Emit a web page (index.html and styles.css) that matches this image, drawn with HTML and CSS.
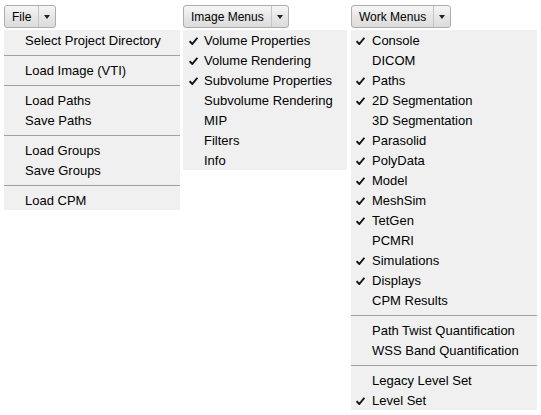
FILE: index.html
```html
<!DOCTYPE html>
<html>
<head>
<meta charset="utf-8">
<link rel="stylesheet" href="styles.css">
</head>
<body>
<div class="bar">
  <div class="col col-file">
    <div class="btn"><span class="btn-label">File</span><span class="btn-arrow"><span class="tri"></span></span></div>
    <div class="menu">
      <div class="item">Select Project Directory</div>
      <div class="sep"></div>
      <div class="item">Load Image (VTI)</div>
      <div class="sep"></div>
      <div class="item">Load Paths</div>
      <div class="item">Save Paths</div>
      <div class="sep"></div>
      <div class="item">Load Groups</div>
      <div class="item">Save Groups</div>
      <div class="sep"></div>
      <div class="item">Load CPM</div>
    </div>
  </div>
  <div class="col col-image">
    <div class="btn"><span class="btn-label">Image Menus</span><span class="btn-arrow"><span class="tri"></span></span></div>
    <div class="menu">
      <div class="item checked">Volume Properties</div>
      <div class="item checked">Volume Rendering</div>
      <div class="item checked">Subvolume Properties</div>
      <div class="item">Subvolume Rendering</div>
      <div class="item">MIP</div>
      <div class="item">Filters</div>
      <div class="item">Info</div>
    </div>
  </div>
  <div class="col col-work">
    <div class="btn"><span class="btn-label">Work Menus</span><span class="btn-arrow"><span class="tri"></span></span></div>
    <div class="menu">
      <div class="item checked">Console</div>
      <div class="item">DICOM</div>
      <div class="item checked">Paths</div>
      <div class="item checked">2D Segmentation</div>
      <div class="item">3D Segmentation</div>
      <div class="item checked">Parasolid</div>
      <div class="item checked">PolyData</div>
      <div class="item checked">Model</div>
      <div class="item checked">MeshSim</div>
      <div class="item checked">TetGen</div>
      <div class="item">PCMRI</div>
      <div class="item checked">Simulations</div>
      <div class="item checked">Displays</div>
      <div class="item">CPM Results</div>
      <div class="sep"></div>
      <div class="item">Path Twist Quantification</div>
      <div class="item">WSS Band Quantification</div>
      <div class="sep"></div>
      <div class="item">Legacy Level Set</div>
      <div class="item checked">Level Set</div>
    </div>
  </div>
</div>
</body>
</html>
```
FILE: styles.css
```css
html, body {
  margin: 0;
  padding: 0;
  background: #ffffff;
}
body {
  font-family: "Liberation Sans", Arial, sans-serif;
  font-size: 13px;
  color: #000;
}
.bar {
  display: flex;
  align-items: flex-start;
  padding-left: 4px;
}
.col {
  display: flex;
  flex-direction: column;
  align-items: flex-start;
}
.col-file { width: 176px; margin-right: 3px; }
.col-image { width: 164px; margin-right: 4px; }
.col-work { width: 186px; }

.btn {
  margin-top: 5px;
  height: 21px;
  display: flex;
  border: 1px solid #adadad;
  border-radius: 3px;
  background: linear-gradient(#f6f6f6, #e4e4e4 60%, #dcdcdc);
  font-size: 12px;
}
.btn-label {
  padding: 0 7px 0 7px;
  line-height: 22px;
  border-right: 1px solid #c4c4c4;
}
.btn-arrow {
  width: 16px;
  display: flex;
  align-items: center;
  justify-content: center;
}
.tri {
  width: 0;
  height: 0;
  border-left: 3.5px solid transparent;
  border-right: 3.5px solid transparent;
  border-top: 4px solid #222;
  margin-top: 1px;
}
.menu {
  margin-top: 2px;
  width: 100%;
  background: #f0f0f0;
}
.item {
  height: 20px;
  line-height: 22px;
  padding-left: 21px;
  position: relative;
  white-space: nowrap;
}
.checked::before {
  content: "";
  position: absolute;
  left: 6px;
  top: 7px;
  width: 9px;
  height: 8px;
  background: no-repeat center / 9px 8px url("data:image/svg+xml;utf8,<svg xmlns='http://www.w3.org/2000/svg' viewBox='0 0 9 8'><path d='M0.6 4.2 L3.3 7 L8.4 0.8' fill='none' stroke='%23111' stroke-width='1.9'/></svg>");
}
.col-work .checked::before { left: 5px; }
.sep {
  height: 10px;
  display: flex;
  align-items: center;
}
.sep::after {
  content: "";
  display: block;
  width: 100%;
  height: 1px;
  background: #a0a0a0;
}
```
